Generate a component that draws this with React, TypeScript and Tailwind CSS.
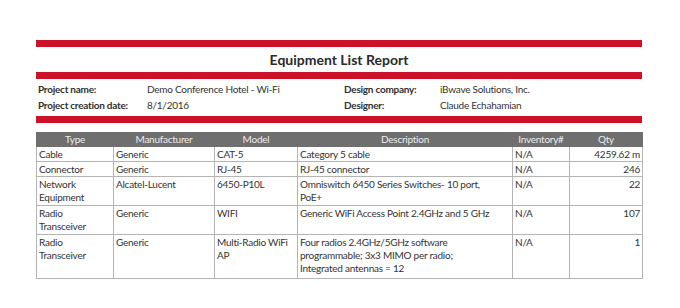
const rows = [
  { type: ["Cable"], maker: "Generic", model: ["CAT-5"], desc: ["Category 5 cable"], qty: "4259.62 m" },
  { type: ["Connector"], maker: "Generic", model: ["RJ-45"], desc: ["RJ-45 connector"], qty: "246" },
  {
    type: ["Network", "Equipment"],
    maker: "Alcatel-Lucent",
    model: ["6450-P10L"],
    desc: ["Omniswitch 6450 Series Switches- 10 port,", "PoE+"],
    qty: "22",
  },
  {
    type: ["Radio", "Transceiver"],
    maker: "Generic",
    model: ["WIFI"],
    desc: ["Generic WiFi Access Point 2.4GHz and 5 GHz"],
    qty: "107",
  },
  {
    type: ["Radio", "Transceiver"],
    maker: "Generic",
    model: ["Multi-Radio WiFi", "AP"],
    desc: ["Four radios 2.4GHz/5GHz software", "programmable; 3x3 MIMO per radio;", "Integrated antennas = 12"],
    qty: "1",
  },
];

function Lines({ items }: { items: string[] }) {
  return (
    <>
      {items.map((t, i) => (
        <div key={i} className="whitespace-nowrap">
          {t}
        </div>
      ))}
    </>
  );
}

export default function App() {
  const head = "border border-[#6f6f6f] font-normal text-center px-[2px] py-0";

  return (
    <div
      className="w-[680px] h-[308px] bg-white text-[#333333]"
      style={{ fontFamily: "Lato, 'Open Sans', sans-serif" }}
    >
      <div className="w-[606px] ml-[36px] pt-[40px]">
        <div className="h-[7px] bg-[#cc1229]" />
        <div className="h-[25px] flex items-center justify-center text-[14px] font-bold text-[#2a2a2a]">
          Equipment List Report
        </div>
        <div className="h-[7px] bg-[#cc1229]" />

        <div className="pt-[1.5px] pb-[3.5px] text-[10px] tracking-[-0.25px] leading-[16px]">
          <div className="grid grid-cols-[111px_196px_97px_1fr]">
            <div className="pl-[2px] font-bold text-[#2f2f2f]">Project name:</div>
            <div>Demo Conference Hotel - Wi-Fi</div>
            <div className="pl-[1px] font-bold text-[#2f2f2f]">Design company:</div>
            <div>iBwave Solutions, Inc.</div>
          </div>
          <div className="grid grid-cols-[111px_196px_97px_1fr]">
            <div className="pl-[2px] font-bold text-[#2f2f2f]">Project creation date:</div>
            <div>8/1/2016</div>
            <div className="pl-[1px] font-bold text-[#2f2f2f]">Designer:</div>
            <div>Claude Echahamian</div>
          </div>
        </div>

        <div className="h-[7px] bg-[#cc1229]" />

        <table className="mt-[9px] w-[606px] table-fixed border-collapse text-[10px] tracking-[-0.25px] leading-[13px]">
          <colgroup>
            <col className="w-[77px]" />
            <col className="w-[101px]" />
            <col className="w-[83px]" />
            <col className="w-[215px]" />
            <col className="w-[57px]" />
            <col className="w-[73px]" />
          </colgroup>
          <thead>
            <tr className="bg-[#6f6f6f] text-[#ececec]">
              <th className={head}>Type</th>
              <th className={head}>Manufacturer</th>
              <th className={head}>Model</th>
              <th className={head}>Description</th>
              <th className={head}>Inventory#</th>
              <th className={head}>Qty</th>
            </tr>
          </thead>
          <tbody>
            {rows.map((r, i) => {
              const multi = r.type.length > 1 || r.desc.length > 1;
              const cell = `border border-[#b4b4b4] px-[2px] pt-[1px] align-top ${
                r.desc.length > 2 ? "pb-[3px]" : multi ? "pb-[1px]" : "pb-0"
              }`;
              return (
                <tr key={i}>
                  <td className={cell}>
                    <Lines items={r.type} />
                  </td>
                  <td className={cell}>{r.maker}</td>
                  <td className={cell}>
                    <Lines items={r.model} />
                  </td>
                  <td className={cell}>
                    <Lines items={r.desc} />
                  </td>
                  <td className={cell}>N/A</td>
                  <td className={`${cell} text-right`}>{r.qty}</td>
                </tr>
              );
            })}
          </tbody>
        </table>
      </div>
    </div>
  );
}
